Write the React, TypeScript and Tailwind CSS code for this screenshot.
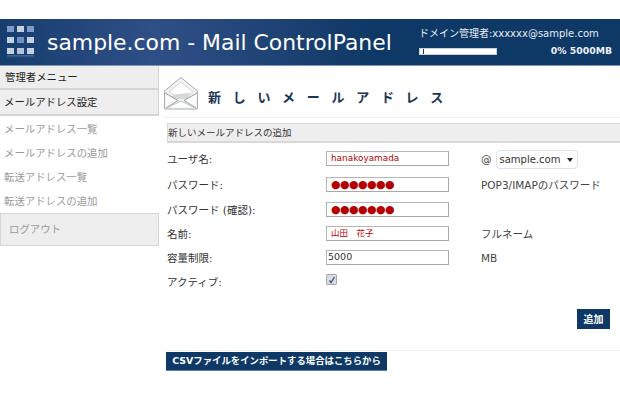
const font = { fontFamily: '"DejaVu Sans","Noto Sans CJK JP",sans-serif' };

function Logo() {
  const cells = ["#7f9cc8", "#c5cfdf", "#7f9cc8", "#c5d0e0", "#7390c6", "#c5d0e0", "#c5d0e0", "#b5c3da", "#c5d0e0"];
  return (
    <div className="relative ml-[7px] grid w-[27px] grid-cols-3 gap-x-[3px] gap-y-[5px]">
      {cells.map((c, i) => (
        <div key={i} className="h-[6px] w-[7px]" style={{ background: c }} />
      ))}
      <div className="col-span-3 -mt-[4px] h-[3px] bg-gradient-to-b from-[#7f97bd] to-transparent opacity-50" />
    </div>
  );
}

function Envelope() {
  return (
    <svg width="36" height="34" viewBox="0 0 36 34" className="shrink-0">
      <path d="M1.5 15 18 1.5 34.5 15V32a1 1 0 0 1-1 1H2.5a1 1 0 0 1-1-1Z" fill="#f1f2f2" stroke="#a9acaf" />
      <path d="M6 16 18 6l12 10-5 3H11Z" fill="#fff" stroke="#d2d4d6" />
      <path d="M8 20c7-2.500 13-2.500 20-3l-3 6H11Z" fill="#d6d8da" />
      <path d="M2 17l13 7.500L3 32M34 17l-13 7.500L33 32" fill="#fbfbfb" stroke="#9a9da0" />
      <path d="M5 31.500 18 25l13 6.500" fill="#fff" stroke="#c4c6c8" />
    </svg>
  );
}

function Box({ children, red = true }: { children: React.ReactNode; red?: boolean }) {
  return (
    <div
      className={`flex h-[15px] w-[123px] items-center whitespace-nowrap border border-b-[#a8a8a8] border-l-[#b5b5b5] border-r-[#a8a8a8] border-t-[#b5b5b5] bg-white ${
        red ? "pl-1 text-[#b40000]" : "pl-px text-[#333]"
      }`}
    >
      {children}
    </div>
  );
}

function Row({ h, label, children, note }: { h: string; label: string; children?: React.ReactNode; note?: React.ReactNode }) {
  return (
    <div className={`flex items-center ${h}`}>
      <div className="w-[159px] shrink-0 pt-[3px] text-[10.500px] text-[#333]">{label}</div>
      <div className="w-[155px] shrink-0">{children}</div>
      <div className="pt-[3px] text-[10.500px] text-[#444]">{note}</div>
    </div>
  );
}

const Dots = () => <span className="text-[11px] leading-none tracking-[-0.6px] text-[#b40000]">●●●●●●●</span>;

export default function App() {
  return (
    <div className="h-[400px] w-[620px] overflow-hidden bg-white pt-[19px]" style={font}>
      <header className="flex h-[47px] items-center border-b border-b-[#7f97b8] bg-gradient-to-r from-[#153e6e] via-[#2f4f87] via-25% to-[#0e3966] to-60%">
        <Logo />
        <h1 className="ml-[13px] w-[372px] whitespace-nowrap pt-[2px] text-[21.900px] leading-none text-white">sample.com - Mail ControlPanel</h1>
        <div className="w-[195px] pt-[1px]">
          <div className="whitespace-nowrap text-[10px] leading-[14px] text-[#e6ebf2]">ドメイン管理者:xxxxxx@sample.com</div>
          <div className="mt-[3px] flex items-center justify-between">
            <div className="h-[7px] w-[78px] border border-[#c8d0dc] bg-white pl-[3px]">
              <div className="h-full w-px bg-[#0e3966]" />
            </div>
            <div className="mr-[2px] whitespace-nowrap text-[9.300px] font-bold leading-[14px] text-[#eef1f6]">0% 5000MB</div>
          </div>
        </div>
      </header>

      <div className="flex">
        <aside className="w-[159px] shrink-0 text-[10.400px]">
          <div className="flex h-[24px] items-center border-b-2 border-r border-[#d4d4d4] bg-[#eeeeee] pl-[5px] pt-[2px] text-[#222]">管理者メニュー</div>
          <div className="flex h-[26px] items-center border-b-2 border-r border-[#d4d4d4] bg-[#eeeeee] pl-[4px] pt-[1px] text-[#222]">メールアドレス設定</div>
          <div className="pt-[1px] text-[#9a9a9a]">
            {["メールアドレス一覧", "メールアドレスの追加", "転送アドレス一覧", "転送アドレスの追加"].map((t) => (
              <div key={t} className="flex h-[24px] items-center pl-[4px] pt-[2px]">{t}</div>
            ))}
          </div>
          <div className="flex h-[33px] items-center border border-[#d6d6d6] bg-[#eeeeee] pl-[8px] pt-[1px] text-[#9a9a9a]">ログアウト</div>
        </aside>

        <main className="min-w-0 flex-1 pl-[4px]">
          <div className="flex h-[52px] items-start border-b border-[#f0f0f0] pt-[10px]">
            <Envelope />
            <h2 className="ml-[9px] mt-[15px] whitespace-nowrap text-[13px] font-bold leading-none tracking-[11.700px] text-[#1a3558]">新しいメールアドレス</h2>
          </div>
          <div className="ml-[4px] mt-[5px] flex h-[20px] items-center border border-b-2 border-[#d8d8d8] border-r-0 bg-[#eeeeee] pt-[2px] text-[9.500px] text-[#333]">新しいメールアドレスの追加</div>
          <div className="border-b border-[#f2f2f2] pb-[21px] pl-[4px] pt-[3px]">
            <Row h="h-[25px]" label="ユーザ名:" note={
              <div className="-mt-[3px] flex translate-y-[1px] items-center gap-[4px]">
                <span>@</span>
                <div className="flex h-[19px] w-[82px] items-center justify-between rounded-sm border border-[#dbe3ea] pl-[3px] pr-[4px] text-[10px] text-[#333]">
                  sample.com
                  <span className="h-0 w-0 border-x-[3px] border-t-[4px] border-x-transparent border-t-[#222]" />
                </div>
              </div>
            }>
              <Box><span className="text-[8.900px]">hanakoyamada</span></Box>
            </Row>
            <Row h="h-[26px]" label="パスワード:" note="POP3/IMAPのパスワード"><Box><Dots /></Box></Row>
            <Row h="h-[24px]" label="パスワード (確認):"><Box><Dots /></Box></Row>
            <Row h="h-[24px]" label="名前:" note="フルネーム">
              <Box><span className="text-[8.500px]">山田　花子</span></Box>
            </Row>
            <Row h="h-[24px]" label="容量制限:" note="MB">
              <Box red={false}><span className="text-[9.500px]">5000</span></Box>
            </Row>
            <Row h="h-[24px]" label="アクティブ:">
              <div className="-mt-[3px] flex h-[11px] w-[11px] items-center justify-center rounded-[1px] border border-[#aaa] bg-[#dcdcdc]">
                <svg width="8" height="8" viewBox="0 0 8 8"><path d="M1.500 4.500 3 6.500 6.500 1" fill="none" stroke="#3a4f9a" strokeWidth="1.300" /></svg>
              </div>
            </Row>
            <div className="mt-[16px] flex justify-end pr-[10px]">
              <button className="flex h-[20px] w-[33px] items-center justify-center bg-[#0e3966] text-[10px] font-bold text-white">追加</button>
            </div>
          </div>
          <button className="ml-[3px] mt-[1px] flex h-[19px] w-[221px] items-center justify-center whitespace-nowrap border-b border-[#5c7ea8] bg-[#0e3966] text-[9.400px] font-bold text-white">CSVファイルをインポートする場合はこちらから</button>
        </main>
      </div>
    </div>
  );
}
